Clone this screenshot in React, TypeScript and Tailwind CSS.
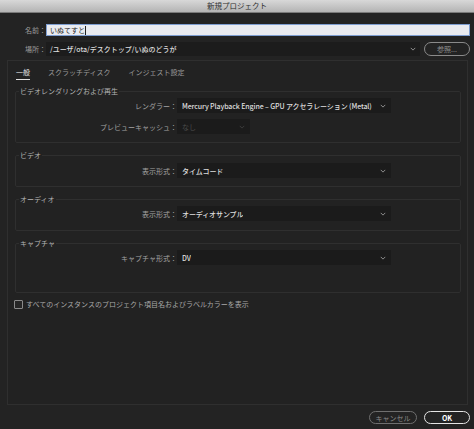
import React from 'react';

const Chevron = ({ className = '' }: { className?: string }) => (
  <svg viewBox="0 0 8 5" className={`w-[6px] h-[4px] shrink-0 ${className}`} aria-hidden="true">
    <path d="M1 1 L4 4 L7 1" fill="none" stroke="currentColor" strokeWidth="1.2" />
  </svg>
);

const Select = ({ value, width, disabled = false }: { value: string; width: string; disabled?: boolean }) => (
  <div
    className={`${width} h-[15px] flex items-center justify-between pl-[5px] pr-[5px] bg-[#1b1b1b] ${
      disabled ? 'text-[#4a4a4a]' : 'text-[#dedede] font-medium'
    }`}
  >
    <span className="whitespace-nowrap overflow-hidden tracking-[-0.1px]">{value}</span>
    <Chevron className={disabled ? 'text-[#3e3e3e]' : 'text-[#9a9a9a]'} />
  </div>
);

const Row = ({ label, children }: { label: string; children: React.ReactNode }) => (
  <div className="flex items-center h-[15px]">
    <div className="w-[161px] text-right text-[#a3a3a3]">{label}</div>
    {children}
  </div>
);

const Group = ({ title, className = '', children }: { title: string; className?: string; children: React.ReactNode }) => (
  <fieldset className={`ml-[7px] w-[446px] border border-[#2f2f2f] rounded-[2px] ${className}`}>
    <legend className="ml-[3px] px-[1px] h-[10px] leading-[10px] text-[#b4b4b4]">{title}</legend>
    {children}
  </fieldset>
);

export default function App() {
  return (
    <div className="w-[474px] h-[429px] bg-[#232323] flex flex-col text-[7px] leading-[10px] font-['Noto_Sans_CJK_JP','Noto_Sans',sans-serif] overflow-hidden">
      {/* title bar */}
      <div className="h-[13px] flex items-center justify-center bg-gradient-to-b from-[#d8d8d8] to-[#b4b4b4] border-b border-[#7a7a7a] text-[7.5px] text-[#303030]">
        新規プロジェクト
      </div>

      {/* name */}
      <div className="mt-[11px] flex items-center h-[12px]">
        <div className="w-[46px] text-right text-[#9c9c9c]">名前：</div>
        <div className="w-[424px] h-[12px] flex items-center pl-[3px] bg-[#e9ebf0] border border-[#7d9dd0] text-[#222]">
          いぬてすと
          <span className="w-px h-[9px] bg-[#222]" />
        </div>
      </div>

      {/* location */}
      <div className="mt-[6px] flex items-center h-[14px]">
        <div className="w-[46px] text-right text-[#9c9c9c]">場所：</div>
        <div className="w-[374px] h-[14px] flex items-center justify-between pl-[4px] pr-[4px] bg-[#1c1c1c] text-[#dcdcdc] font-medium">
          <span>/ユーザ/ota/デスクトップ/いぬのどうが</span>
          <Chevron className="text-[#9a9a9a]" />
        </div>
        <button className="ml-[4px] w-[46px] h-[14px] rounded-full border border-[#8a8a8a] text-[#8f8f8f] flex items-center justify-center">
          参照...
        </button>
      </div>

      {/* tab panel */}
      <div className="mt-[4px] ml-[7px] w-[461px] h-[345px] border border-[#2f2f2f] bg-[#222222] flex flex-col">
        <div className="flex gap-[18px] pl-[8px] pt-[6px]">
          <div className="pb-[2px] border-b border-[#e0e0e0] text-[#e0e0e0]">一般</div>
          <div className="text-[#9a9a9a]">スクラッチディスク</div>
          <div className="text-[#9a9a9a]">インジェスト設定</div>
        </div>

        <Group title="ビデオレンダリングおよび再生" className="mt-[6px] pt-[2px] pb-[8px]">
          <Row label="レンダラー：">
            <Select width="w-[214px]" value="Mercury Playback Engine – GPU アクセラレーション (Metal)" />
          </Row>
          <div className="mt-[6px]">
            <Row label="プレビューキャッシュ：">
              <Select width="w-[73px]" value="なし" disabled />
            </Row>
          </div>
        </Group>

        <Group title="ビデオ" className="mt-[7px] pt-[3px] pb-[8px]">
          <Row label="表示形式：">
            <Select width="w-[214px]" value="タイムコード" />
          </Row>
        </Group>

        <Group title="オーディオ" className="mt-[7px] pt-[2px] pb-[9px]">
          <Row label="表示形式：">
            <Select width="w-[214px]" value="オーディオサンプル" />
          </Row>
        </Group>

        <Group title="キャプチャ" className="mt-[7px] pt-[2px] pb-[27px]">
          <Row label="キャプチャ形式：">
            <Select width="w-[214px]" value="DV" />
          </Row>
        </Group>

        <label className="mt-[6px] ml-[6px] flex items-center gap-[3px] text-[#a8a8a8]">
          <span className="w-[9px] h-[9px] border border-[#8a8a8a] rounded-[1px] bg-[#262626]" />
          すべてのインスタンスのプロジェクト項目名およびラベルカラーを表示
        </label>
      </div>

      {/* footer buttons */}
      <div className="mt-[6px] flex justify-end gap-[7px] pr-[4px]">
        <button className="w-[48px] h-[13px] rounded-full border border-[#6f6f6f] text-[#8a8a8a] flex items-center justify-center">
          キャンセル
        </button>
        <button className="w-[46px] h-[13px] rounded-full border-[1.5px] border-[#e4e4e4] text-white font-bold flex items-center justify-center">
          OK
        </button>
      </div>
    </div>
  );
}
